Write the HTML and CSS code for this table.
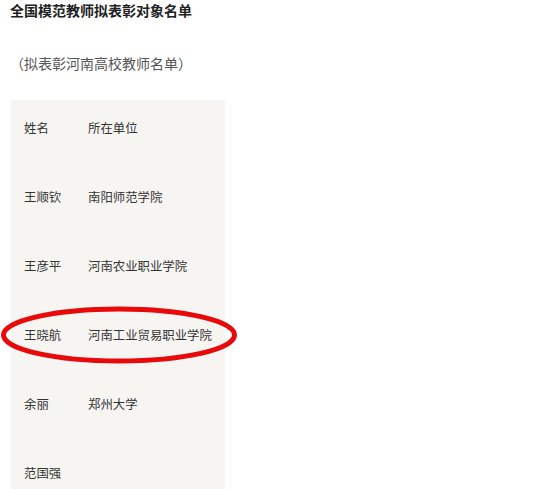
FILE: index.html
```html
<!DOCTYPE html>
<html lang="zh">
<head>
<meta charset="utf-8">
<link rel="stylesheet" href="styles.css">
</head>
<body>
<div class="page">
  <h1 class="title">全国模范教师拟表彰对象名单</h1>
  <p class="subtitle">（拟表彰河南高校教师名单）</p>
  <div class="table">
    <div class="row"><span class="name">姓名</span><span class="unit">所在单位</span></div>
    <div class="row"><span class="name">王顺钦</span><span class="unit">南阳师范学院</span></div>
    <div class="row"><span class="name">王彦平</span><span class="unit">河南农业职业学院</span></div>
    <div class="row"><span class="name">王晓航</span><span class="unit">河南工业贸易职业学院</span></div>
    <div class="row"><span class="name">余丽</span><span class="unit">郑州大学</span></div>
    <div class="row"><span class="name">范国强</span><span class="unit"></span></div>
  </div>
  <svg class="circle" width="244" height="66" viewBox="0 0 244 66">
    <ellipse cx="120" cy="31" rx="115.5" ry="26" fill="none" stroke="#e8090b" stroke-width="5"/>
  </svg>
</div>
</body>
</html>
```
FILE: styles.css
```css
html, body {
  margin: 0;
  padding: 0;
  background: #ffffff;
  overflow: hidden;
}
.page {
  position: relative;
  width: 554px;
  height: 489px;
  overflow: hidden;
  font-family: "Microsoft YaHei", "Noto Sans CJK SC", sans-serif;
  color: #333;
}
.title {
  margin: 0;
  padding-left: 10px;
  font-size: 14px;
  line-height: 20px;
  font-weight: bold;
  color: #222;
}
.subtitle {
  margin: 33px 0 0 0;
  padding-left: 10px;
  font-size: 14px;
  line-height: 20px;
  color: #555;
}
.table {
  margin: 27px 0 0 11px;
  width: 214px;
  background: #f7f5f2;
  padding: 18px 0 40px 13px;
  box-sizing: border-box;
  display: flex;
  flex-direction: column;
  gap: 49px;
}
.row {
  display: flex;
  font-size: 12.4px;
  line-height: 20px;
  color: #333;
}
.name {
  width: 64px;
  flex: none;
}
.circle {
  position: absolute;
  left: -1px;
  top: 304px;
}
```
